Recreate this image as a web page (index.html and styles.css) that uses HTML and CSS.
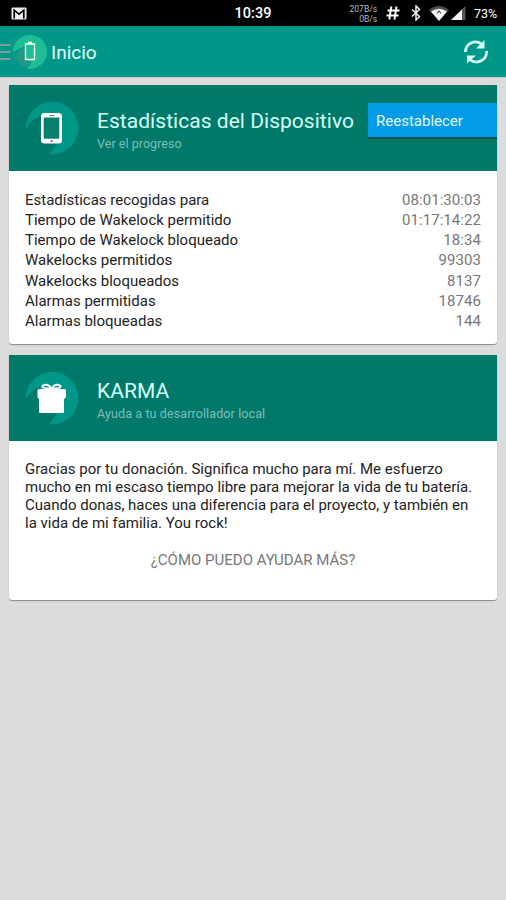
FILE: index.html
```html
<!DOCTYPE html>
<html lang="es">
<head>
<meta charset="utf-8">
<title>Inicio</title>
<link rel="stylesheet" href="styles.css">
</head>
<body>
<div class="status">
  <svg class="mail" width="16" height="13" viewBox="0 0 16 13"><rect x=".5" y=".5" width="15" height="12" rx="1" fill="#eee"/><path d="M3.200 11.500V3.200L8 7.200l4.800-4v8.300" fill="none" stroke="#000" stroke-width="1.700"/></svg>
  <time class="clock">10:39</time>
  <div class="tray">
    <div class="speed"><div>207B/s</div><div>0B/s</div></div>
    <svg class="hash" width="14" height="14" viewBox="0 0 14 14"><path d="M5.300.5 3.300 13.500M10.500.5l-2 13M1.500 4.500h12M.5 9.500h12" fill="none" stroke="#fff" stroke-width="1.900"/></svg>
    <svg class="bt" width="10" height="16" viewBox="0 0 10 16"><path d="M1 4.500l7.500 7L5 15V1l3.500 3.500-7.500 7" fill="none" stroke="#eee" stroke-width="1.500"/></svg>
    <svg class="wifi" width="20" height="15" viewBox="0 0 20 15"><path d="M0 4Q10-4 20 4L10 15Z" fill="#4c4c4c"/><path d="M2 5.500Q10 0 18 5.500L10 15Z" fill="#f4f4f4"/><path d="M8 7.500 10 5l2 2.500" fill="none" stroke="#555" stroke-width="1.200"/></svg>
    <svg class="cell" width="15" height="14" viewBox="0 0 15 14"><path d="M0 14 14.500 0v14Z" fill="#555"/><path d="M0 14 11 3.400V14Z" fill="#f4f4f4"/></svg>
    <span class="pct">73%</span>
  </div>
</div>
<header class="bar">
  <svg class="menu" width="11" height="18" viewBox="0 0 11 18"><path d="M0 2h10.500M0 9h10.500M0 16h10.500" stroke="#7c9f9a" stroke-width="2"/></svg>
  <svg class="logo" width="34" height="34" viewBox="0 0 34 34"><path d="M0 17A17 17 0 1 1 14 33.700L19 27 12 25V11Z" fill="#1fbd96"/><path d="M2 22Q6 15 12 12v13l7 2-5 6Q5 30 2 22Z" fill="#1f9986"/><path d="M12.500 9h9v15.500h-9ZM15 7.500h4" fill="none" stroke="#f3ffdc" stroke-width="1.400"/></svg>
  <h1>Inicio</h1>
  <svg class="sync" width="26" height="26" viewBox="0 0 26 26"><path d="M2.500 13A10 10 0 0 1 18.500 5M23.500 12A10 10 0 0 1 7 20.500" fill="none" stroke="#d5fff8" stroke-width="2.800"/><path d="M21.500 1v8.500H13ZM4 24.500V16.500h9Z" fill="#d5fff8"/></svg>
</header>
<main>
  <section class="card stats">
    <div class="head">
      <svg class="badge" width="54" height="54" viewBox="0 0 54 54"><path d="M.8 28A26.300 26.300 0 1 1 24 53.200L33 42 17 39V14Q7 18 .8 28Z" fill="#009688"/><rect x="16" y="12" width="21" height="30.500" rx="3.500" fill="#fff"/><rect x="18.700" y="16.500" width="15.600" height="21.200" fill="#087f70"/><path d="M24 14.500h5.500" stroke="#789" stroke-width="1"/><circle cx="26.700" cy="40" r="1" fill="#456"/></svg>
      <div class="titles"><h2>Estadísticas del Dispositivo</h2><p>Ver el progreso</p></div>
      <button class="reset">Reestablecer</button>
    </div>
    <dl>
      <div><dt>Estadísticas recogidas para</dt><dd>08:01:30:03</dd></div>
      <div><dt>Tiempo de Wakelock permitido</dt><dd>01:17:14:22</dd></div>
      <div><dt>Tiempo de Wakelock bloqueado</dt><dd>18:34</dd></div>
      <div><dt>Wakelocks permitidos</dt><dd>99303</dd></div>
      <div><dt>Wakelocks bloqueados</dt><dd>8137</dd></div>
      <div><dt>Alarmas permitidas</dt><dd>18746</dd></div>
      <div><dt>Alarmas bloqueadas</dt><dd>144</dd></div>
    </dl>
  </section>
  <section class="card karma">
    <div class="head">
      <svg class="badge" width="54" height="54" viewBox="0 0 54 54"><path d="M.8 28A26.300 26.300 0 1 1 24 53.200L33 41 15 40V16Q6 19 .8 28Z" fill="#009688"/><path d="M14 18h25.500q1.500 0 1.500 1.500v7l-2 1.500V41q0 1-1 1H15q-1 0-1-1V28l-1.500-1.500v-7q0-1.500 1.500-1.500Z" fill="#fff"/><path d="M26.500 17.500Q15 17.500 18 14.500q5-2.500 8.500 3Q30 12 35 14.500q3 3-8.500 3" fill="none" stroke="#fff" stroke-width="1.800"/></svg>
      <div class="titles"><h2>KARMA</h2><p class="local">Ayuda a tu desarrollador local</p></div>
    </div>
    <p class="thanks">Gracias por tu donación. Significa mucho para mí. Me esfuerzo<br>mucho en mi escaso tiempo libre para mejorar la vida de tu batería.<br>Cuando donas, haces una diferencia para el proyecto, y también en<br>la vida de mi familia. You rock!</p>
    <button class="more">¿CÓMO PUEDO AYUDAR MÁS?</button>
  </section>
</main>
</body>
</html>
```
FILE: styles.css
```css
* { box-sizing: border-box; margin: 0; padding: 0; }
body { background: #dcdcdc; font-family: Roboto, sans-serif; min-height: 900px; overflow: hidden; }
svg { display: block; flex: none; }
button { border: 0; font-family: inherit; }
.status { height: 26px; background: #000; color: #fff; display: grid; grid-template-columns: 1fr 38px 1fr; align-items: center; }
.mail { margin-left: 11px; }
.clock { font-size: 14.500px; font-weight: 500; white-space: nowrap; text-align: center; line-height: 24px; padding-top: 2px; }
.tray { display: flex; align-items: center; justify-content: flex-end; padding-right: 9px; }
.speed { font-size: 8.500px; line-height: 10px; text-align: right; color: #bbb; margin-right: 9px; padding-top: 1px; }
.hash { margin-right: 11px; }
.bt { margin-right: 8px; }
.wifi { margin-right: 2px; }
.cell { margin-right: 8px; }
.pct { font-size: 12.500px; line-height: 24px; padding-top: 2px; letter-spacing: -.1px; }
.bar { height: 51px; background: #009688; display: flex; align-items: center; padding-right: 17px; }
.menu { margin-right: 2px; }
.logo { margin-right: 4px; }
.bar h1 { font-size: 19px; font-weight: 400; color: #e4fffa; flex: 1; line-height: 24px; padding-top: 2px; }
main { padding: 7px 9px 0; border-top: 1px solid #d2c9ca; }
.card { background: #fff; border-radius: 0 0 3px 3px; box-shadow: 0 1px 1px #888; margin-bottom: 11px; }
.stats { height: 259px; }
.karma { height: 245px; }
.head { height: 86px; background: #00796b; display: flex; align-items: center; padding-left: 16px; }
.badge { margin-right: 18px; }
.titles { width: 271px; white-space: nowrap; padding-top: 4px; }
.titles h2 { font-size: 21px; line-height: 24px; font-weight: 400; color: #d4fff6; letter-spacing: .03px; }
.titles p { font-size: 12.500px; line-height: 17px; margin-top: 2px; color: #7fbdb3; letter-spacing: .04px; }
.titles .local { letter-spacing: .11px; }
.reset { flex: 1; height: 34px; margin-top: -17px; background: #039be5; color: #e3f8ff; font-size: 15px; text-align: left; padding-left: 8px; padding-top: 3px; box-shadow: 0 2px 1px #075449; }
.stats .head { overflow: hidden; }
dl { padding: 19px 16px 0; }
dl div { display: flex; justify-content: space-between; height: 20.140px; line-height: 20px; font-size: 15px; }
dt { color: #222; }
dd { color: #777; letter-spacing: .06px; }
.thanks { padding: 20px 16px 0; font-size: 15px; line-height: 17.900px; color: #222; white-space: nowrap; }
.more { display: block; width: 100%; margin-top: 17px; background: none; color: #777; font-size: 15px; line-height: 20px; }
```
